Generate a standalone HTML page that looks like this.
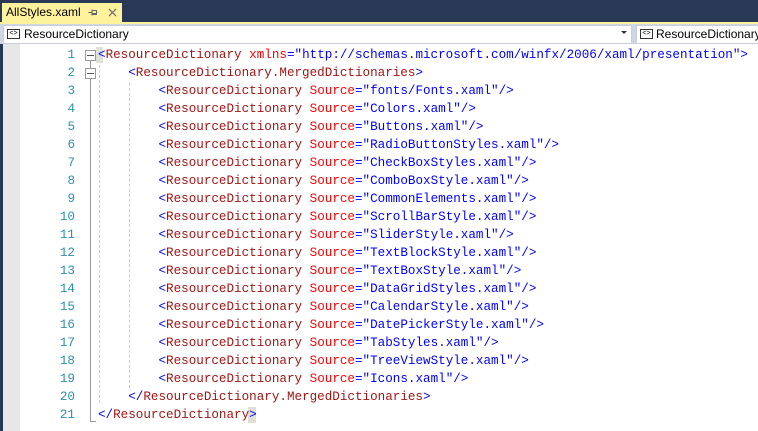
<!DOCTYPE html>
<html><head><meta charset="utf-8"><style>
body{margin:0;width:758px;height:431px;overflow:hidden;background:#fff;position:relative;font-family:"Liberation Sans",sans-serif}
.a{position:absolute}
.code{font-family:"Liberation Mono",monospace;font-size:12.6px;line-height:18px;white-space:pre}
.t{color:#a31515}.b{color:#0000ff}.r{color:#ff0000}
.n{color:#2b91af;text-align:right;width:40px}
</style></head><body>
<div class="a" style="left:0;top:0;width:758px;height:22px;background:#293955"></div>
<div class="a" style="left:2px;top:3px;width:120px;height:20px;background:#fff29d"></div>
<div class="a" style="left:6px;top:5px;font-size:12px;color:#000">AllStyles.xaml</div>
<svg class="a" style="left:88px;top:8px" width="10" height="9"><path d="M0.5 4.5H4M4 1.5V7.5M4 2.5H8.5V6.5H4M4 5.5H8.5" stroke="#666" fill="none"/></svg>
<svg class="a" style="left:108px;top:8px" width="9" height="9"><path d="M1 1L8 8M8 1L1 8" stroke="#777" stroke-width="1.3"/></svg>
<div class="a" style="left:0;top:22px;width:758px;height:2px;background:#fff29d"></div>
<div class="a" style="left:0;top:24px;width:758px;height:20px;background:#cfd6e5"></div>
<div class="a" style="left:3px;top:25px;width:627px;height:17px;background:#fff;border:1px solid #ccd"></div>
<div class="a" style="left:636px;top:25px;width:122px;height:17px;background:#fff;border:1px solid #ccd"></div>
<div class="a" style="left:7px;top:29px;width:11px;height:8px;border:1px solid #333;font-size:7px;line-height:8px;text-align:center">&lt;&gt;</div>
<div class="a" style="left:24px;top:27px;font-size:12px">ResourceDictionary</div>
<div class="a" style="left:621px;top:31px;width:0;height:0;border-left:3px solid transparent;border-right:3px solid transparent;border-top:3px solid #333"></div>
<div class="a" style="left:640px;top:29px;width:11px;height:8px;border:1px solid #333;font-size:7px;line-height:8px;text-align:center">&lt;&gt;</div>
<div class="a" style="left:656px;top:27px;font-size:12px">ResourceDictionary</div>
<div class="a" style="left:0;top:44px;width:3px;height:387px;background:#293955"></div>
<div class="a" style="left:3px;top:44px;width:17px;height:387px;background:#e6e7e8"></div>
<div class="a code n" style="left:35px;top:46px">1
2
3
4
5
6
7
8
9
10
11
12
13
14
15
16
17
18
19
20
21</div>
<div class="a" style="left:90px;top:55px;width:1px;height:366px;background:#999"></div>
<div class="a" style="left:90px;top:421px;width:6px;height:1px;background:#999"></div>
<div class="a" style="left:85px;top:50px;width:9px;height:9px;border:1px solid #999;background:#fff"></div>
<div class="a" style="left:87px;top:55px;width:7px;height:1px;background:#555"></div>
<div class="a" style="left:85px;top:68px;width:9px;height:9px;border:1px solid #999;background:#fff"></div>
<div class="a" style="left:87px;top:73px;width:7px;height:1px;background:#555"></div>
<div class="a" style="left:99px;top:65px;width:0;height:338px;border-left:1px dashed #ccc"></div>
<div class="a" style="left:129px;top:83px;width:0;height:305px;border-left:1px dashed #ccc"></div>
<div class="a" style="left:96px;top:47px;width:7px;height:16px;background:#dfe1d4"></div>
<div class="a" style="left:248px;top:407px;width:8px;height:16px;background:#dfe1d4"></div>
<div class="a code" style="left:98px;top:46px"><span class="b">&lt;</span><span class="t">ResourceDictionary</span> <span class="r">xmlns</span><span class="b">="http://schemas.microsoft.com/winfx/2006/xaml/presentation"&gt;</span>
    <span class="b">&lt;</span><span class="t">ResourceDictionary.MergedDictionaries</span><span class="b">&gt;</span>
        <span class="b">&lt;</span><span class="t">ResourceDictionary</span> <span class="r">Source</span><span class="b">="fonts/Fonts.xaml"/&gt;</span>
        <span class="b">&lt;</span><span class="t">ResourceDictionary</span> <span class="r">Source</span><span class="b">="Colors.xaml"/&gt;</span>
        <span class="b">&lt;</span><span class="t">ResourceDictionary</span> <span class="r">Source</span><span class="b">="Buttons.xaml"/&gt;</span>
        <span class="b">&lt;</span><span class="t">ResourceDictionary</span> <span class="r">Source</span><span class="b">="RadioButtonStyles.xaml"/&gt;</span>
        <span class="b">&lt;</span><span class="t">ResourceDictionary</span> <span class="r">Source</span><span class="b">="CheckBoxStyles.xaml"/&gt;</span>
        <span class="b">&lt;</span><span class="t">ResourceDictionary</span> <span class="r">Source</span><span class="b">="ComboBoxStyle.xaml"/&gt;</span>
        <span class="b">&lt;</span><span class="t">ResourceDictionary</span> <span class="r">Source</span><span class="b">="CommonElements.xaml"/&gt;</span>
        <span class="b">&lt;</span><span class="t">ResourceDictionary</span> <span class="r">Source</span><span class="b">="ScrollBarStyle.xaml"/&gt;</span>
        <span class="b">&lt;</span><span class="t">ResourceDictionary</span> <span class="r">Source</span><span class="b">="SliderStyle.xaml"/&gt;</span>
        <span class="b">&lt;</span><span class="t">ResourceDictionary</span> <span class="r">Source</span><span class="b">="TextBlockStyle.xaml"/&gt;</span>
        <span class="b">&lt;</span><span class="t">ResourceDictionary</span> <span class="r">Source</span><span class="b">="TextBoxStyle.xaml"/&gt;</span>
        <span class="b">&lt;</span><span class="t">ResourceDictionary</span> <span class="r">Source</span><span class="b">="DataGridStyles.xaml"/&gt;</span>
        <span class="b">&lt;</span><span class="t">ResourceDictionary</span> <span class="r">Source</span><span class="b">="CalendarStyle.xaml"/&gt;</span>
        <span class="b">&lt;</span><span class="t">ResourceDictionary</span> <span class="r">Source</span><span class="b">="DatePickerStyle.xaml"/&gt;</span>
        <span class="b">&lt;</span><span class="t">ResourceDictionary</span> <span class="r">Source</span><span class="b">="TabStyles.xaml"/&gt;</span>
        <span class="b">&lt;</span><span class="t">ResourceDictionary</span> <span class="r">Source</span><span class="b">="TreeViewStyle.xaml"/&gt;</span>
        <span class="b">&lt;</span><span class="t">ResourceDictionary</span> <span class="r">Source</span><span class="b">="Icons.xaml"/&gt;</span>
    <span class="b">&lt;/</span><span class="t">ResourceDictionary.MergedDictionaries</span><span class="b">&gt;</span>
<span class="b">&lt;/</span><span class="t">ResourceDictionary</span><span class="b">&gt;</span></div>
</body></html>
